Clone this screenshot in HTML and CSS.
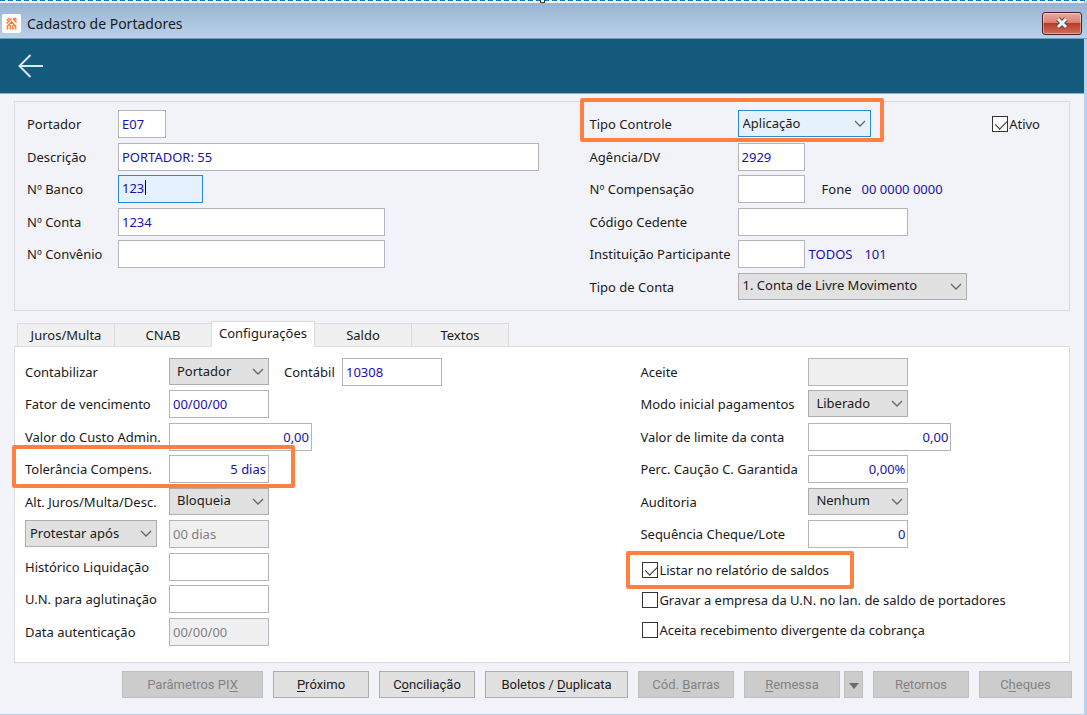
FILE: index.html
```
<!DOCTYPE html>
<html lang="pt-BR">
<head>
  <meta charset="UTF-8">
  <meta name="viewport" content="width=device-width, initial-scale=1.0">
  <title>Cadastro de Portadores</title>
  <link rel="stylesheet" href="styles.css">
</head>
<body>

  <!-- Ícone de seta dos combos -->
  <svg class="sprites" aria-hidden="true">
    <symbol id="seta" viewBox="0 0 12 7">
      <path d="M1 1l5 5 5-5" fill="none" stroke="#666" stroke-width="1.3"/>
    </symbol>
  </svg>

  <div class="janela">
    <span class="puxador"></span>

    <!-- Barra de título -->
    <header class="titulo">
      <svg class="logo" viewBox="0 0 19 19" aria-hidden="true">
        <rect width="19" height="19" rx="2" fill="#fff"/>
        <g fill="none" stroke="#f5813c" stroke-width="1.6">
          <path d="M4.500 6.500L7.500 4M4.500 9.500l5-5M5 12.500l4.500-4.500 4.500 4.500M11 4.500l3.500 4M12.500 3.800l2 2M5.500 12v3.500M8.300 11v4.500M10.900 11v4.500M13.600 12v3.500"/>
        </g>
      </svg>
      <h1>Cadastro de Portadores</h1>
      <button type="button" class="fechar" aria-label="Fechar">
        <svg viewBox="0 0 14 12" aria-hidden="true">
          <path d="M3 2l8 8M11 2l-8 8" stroke="#5b4a55" stroke-width="5"/>
          <path d="M3 2l8 8M11 2l-8 8" stroke="#f2f2f2" stroke-width="3"/>
        </svg>
      </button>
    </header>

    <!-- Barra de ferramentas -->
    <nav class="ferramentas">
      <button type="button" class="voltar" aria-label="Voltar">
        <svg viewBox="0 0 26 24" aria-hidden="true">
          <path d="M25 12H1.500M12.500 1L1.500 12l11 11" fill="none" stroke="#dde6ec" stroke-width="2"/>
        </svg>
      </button>
    </nav>

    <form class="conteudo">

      <!-- Dados principais -->
      <section class="dados">
        <div class="coluna">
          <div class="linha">
            <label for="portador">Portador</label>
            <input type="text" id="portador" class="w48" value="E07">
          </div>
          <div class="linha">
            <label for="descricao">Descrição</label>
            <input type="text" id="descricao" class="w421" value="PORTADOR: 55">
          </div>
          <div class="linha">
            <label for="banco">Nº Banco</label>
            <span class="foco w85"><input type="text" id="banco" value="123"></span>
          </div>
          <div class="linha">
            <label for="conta">Nº Conta</label>
            <input type="text" id="conta" class="w267" value="1234">
          </div>
          <div class="linha">
            <label for="convenio">Nº Convênio</label>
            <input type="text" id="convenio" class="w267">
          </div>
        </div>

        <div class="coluna direita">
          <div class="linha">
            <div class="destaque destaque-tipo">
              <label for="tipo-controle">Tipo Controle</label>
              <span class="combo ativo w133">
                <select id="tipo-controle"><option>Aplicação</option></select>
                <svg><use href="#seta"/></svg>
              </span>
            </div>
            <label class="marca marca-ativo"><input type="checkbox" checked>Ativo</label>
          </div>
          <div class="linha">
            <label for="agencia">Agência/DV</label>
            <input type="text" id="agencia" class="w67" value="2929">
          </div>
          <div class="linha">
            <label for="compensacao">Nº Compensação</label>
            <input type="text" id="compensacao" class="w67">
            <span class="fone">Fone</span>
            <output>00 0000 0000</output>
          </div>
          <div class="linha">
            <label for="cedente">Código Cedente</label>
            <input type="text" id="cedente" class="w170">
          </div>
          <div class="linha">
            <label for="instituicao">Instituição Participante</label>
            <input type="text" id="instituicao" class="w67">
            <output class="instituicao"><span>TODOS</span><span>101</span></output>
          </div>
          <div class="linha">
            <label for="tipo-conta">Tipo de Conta</label>
            <span class="combo w229">
              <select id="tipo-conta"><option>1. Conta de Livre Movimento</option></select>
              <svg><use href="#seta"/></svg>
            </span>
          </div>
        </div>
      </section>

      <!-- Abas -->
      <div class="abas" role="tablist">
        <button type="button" role="tab">Juros/Multa</button>
        <button type="button" role="tab">CNAB</button>
        <button type="button" role="tab" class="selecionada" aria-selected="true">Configurações</button>
        <button type="button" role="tab">Saldo</button>
        <button type="button" role="tab">Textos</button>
      </div>

      <section class="painel">
        <div class="coluna">
          <div class="linha">
            <label for="contabilizar">Contabilizar</label>
            <span class="combo w100">
              <select id="contabilizar"><option>Portador</option></select>
              <svg><use href="#seta"/></svg>
            </span>
            <label for="contabil" class="contabil">Contábil</label>
            <input type="text" id="contabil" class="w100" value="10308">
          </div>
          <div class="linha">
            <label for="fator">Fator de vencimento</label>
            <input type="text" id="fator" class="w100" value="00/00/00">
          </div>
          <div class="linha">
            <label for="custo">Valor do Custo Admin.</label>
            <input type="text" id="custo" class="w143 numero" value="0,00">
          </div>
          <div class="linha">
            <div class="destaque destaque-tolerancia">
              <label for="tolerancia">Tolerância Compens.</label>
              <input type="text" id="tolerancia" class="w100 numero" value="5 dias">
            </div>
          </div>
          <div class="linha">
            <label for="alteracao">Alt. Juros/Multa/Desc.</label>
            <span class="combo w100">
              <select id="alteracao"><option>Bloqueia</option></select>
              <svg><use href="#seta"/></svg>
            </span>
          </div>
          <div class="linha">
            <span class="combo protesto">
              <select id="protesto" aria-label="Protesto"><option>Protestar após</option></select>
              <svg><use href="#seta"/></svg>
            </span>
            <input type="text" class="w100" value="00 dias" aria-label="Dias para protesto" disabled>
          </div>
          <div class="linha">
            <label for="historico">Histórico Liquidação</label>
            <input type="text" id="historico" class="w100">
          </div>
          <div class="linha">
            <label for="aglutinacao">U.N. para aglutinação</label>
            <input type="text" id="aglutinacao" class="w100">
          </div>
          <div class="linha">
            <label for="autenticacao">Data autenticação</label>
            <input type="text" id="autenticacao" class="w100" value="00/00/00" disabled>
          </div>
        </div>

        <div class="coluna direita">
          <div class="linha">
            <label for="aceite">Aceite</label>
            <input type="text" id="aceite" class="w100" disabled>
          </div>
          <div class="linha">
            <label for="modo">Modo inicial pagamentos</label>
            <span class="combo w100">
              <select id="modo"><option>Liberado</option></select>
              <svg><use href="#seta"/></svg>
            </span>
          </div>
          <div class="linha">
            <label for="limite">Valor de limite da conta</label>
            <input type="text" id="limite" class="w143 numero" value="0,00">
          </div>
          <div class="linha">
            <label for="caucao">Perc. Caução C. Garantida</label>
            <input type="text" id="caucao" class="w100 numero" value="0,00%">
          </div>
          <div class="linha">
            <label for="auditoria">Auditoria</label>
            <span class="combo w100">
              <select id="auditoria"><option>Nenhum</option></select>
              <svg><use href="#seta"/></svg>
            </span>
          </div>
          <div class="linha">
            <label for="sequencia">Sequência Cheque/Lote</label>
            <input type="text" id="sequencia" class="w100 numero" value="0">
          </div>
          <div class="marcas">
            <label class="marca destaque destaque-listar"><input type="checkbox" checked>Listar no relatório de saldos</label>
            <label class="marca"><input type="checkbox">Gravar a empresa da U.N. no lan. de saldo de portadores</label>
            <label class="marca"><input type="checkbox">Aceita recebimento divergente da cobrança</label>
          </div>
        </div>
      </section>

      <!-- Botões do rodapé -->
      <footer class="acoes">
        <button type="button" class="w141" disabled>Parâmetros PI<u>X</u></button>
        <button type="button"><u>P</u>róximo</button>
        <button type="button">C<u>o</u>nciliação</button>
        <button type="button" class="w143">Boletos / <u>D</u>uplicata</button>
        <button type="button" disabled>Cód. <u>B</u>arras</button>
        <div class="grupo">
          <button type="button" disabled><u>R</u>emessa</button>
          <button type="button" class="menu" aria-label="Mais opções de remessa" disabled>
            <svg viewBox="0 0 10 6"><path d="M0 0h10L5 6z" fill="#6d6d6d"/></svg>
          </button>
        </div>
        <button type="button" disabled>R<u>e</u>tornos</button>
        <button type="button" class="w93" disabled>C<u>h</u>eques</button>
      </footer>
    </form>
  </div>

</body>
</html>
```
FILE: styles.css
```
/* Base */
* {
  box-sizing: border-box;
}

body {
  margin: 0;
  font-family: "Noto Sans", "Open Sans", sans-serif;
  font-size: 13px;
  color: #1a1a1a;
  background-color: #f2f3f9;
}

input, select, button {
  font: inherit;
}

.sprites {
  display: none;
}

/* Janela */
.janela {
  position: relative;
  display: flex;
  flex-direction: column;
  min-height: 100vh;
  padding-top: 3px;
  border-right: 3px solid #b9d1ea;
  border-bottom: 2px solid #b9d1ea;
}

/* Borda tracejada da seleção */
.janela::before {
  content: "";
  position: absolute;
  top: 0;
  left: 0;
  right: -3px;
  height: 1px;
  background: repeating-linear-gradient(to right, #0078d7 0 5px, #fff 5px 8px);
}

.puxador {
  position: absolute;
  top: 0;
  left: 540px;
  width: 5px;
  height: 3px;
  background-color: #fff;
  border: 1px solid #444;
  border-top: none;
}

.titulo {
  display: flex;
  align-items: center;
  gap: 6px;
  height: 36px;
  padding: 5px 0 0 2px;
  margin-right: -3px;
  background: linear-gradient(#99b4d1, #b9d1ea);
  border-bottom: 1px solid #6f9bbb;
}

.titulo h1 {
  margin: 0;
  font-size: 14px;
  font-weight: normal;
}

.logo {
  width: 19px;
  height: 19px;
}

.fechar {
  display: flex;
  align-items: center;
  justify-content: center;
  width: 40px;
  height: 23px;
  margin: 0 5px 0 auto;
  padding: 0;
  background: linear-gradient(#e9a79b, #d98476 45%, #b93a25 50%, #d0705c);
  border: 1px solid #4b1e2c;
  border-radius: 3px;
  box-shadow: inset 0 0 0 1px rgba(255, 255, 255, 0.4);
}

.fechar svg {
  width: 14px;
  height: 12px;
}

.ferramentas {
  display: flex;
  align-items: center;
  height: 55px;
  padding-left: 18px;
  background-color: #145a7c;
  border-bottom: 1px solid #8fb3c9;
}

.voltar {
  display: flex;
  padding: 0;
  background: none;
  border: none;
}

.voltar svg {
  width: 26px;
  height: 24px;
}

.conteudo {
  display: flex;
  flex: 1;
  flex-direction: column;
  padding: 7px 14px 16px;
}

/* Quadros com os campos */
.dados, .painel {
  display: grid;
  border: 1px solid #dcdce0;
}

.dados {
  grid-template-columns: 562fr 479fr;
  min-height: 210px;
  padding: 8px 0 5px 12px;
}

.painel {
  grid-template-columns: 616fr 429fr;
  min-height: 317px;
  padding: 11px 0 12px 10px;
  background-color: #fff;
}

.coluna {
  display: grid;
  grid-template-rows: repeat(6, 1fr);
}

.painel .coluna {
  grid-template-rows: repeat(9, 1fr);
}

.linha, .linha > .destaque {
  display: flex;
  align-items: flex-start;
}

.linha label, .linha output, .fone {
  line-height: 28px;
  white-space: nowrap;
}

.dados .linha label:first-child {
  width: 91px;
}

.dados .direita .linha label:first-child {
  width: 148px;
}

.painel .linha label:first-child {
  width: 144px;
}

.painel .direita .linha label:first-child {
  width: 168px;
}

/* Campos de texto */
input[type="text"] {
  height: 28px;
  padding: 0 3px;
  color: #2010a8;
  background-color: #fff;
  border: 1px solid #b4b4bc;
  border-radius: 0;
  outline: none;
}

input[type="text"]:disabled {
  color: #808080;
  background-color: #f0f0f0;
}

input[type="text"].numero {
  padding-right: 2px;
  text-align: right;
}

.foco {
  position: relative;
}

.foco input[type="text"] {
  width: 100%;
  padding-bottom: 3px;
  background-color: #e5f1ff;
  border-color: #2a8ad8;
}

/* Cursor de texto */
.foco::after {
  content: "";
  position: absolute;
  top: 5px;
  left: 27px;
  width: 1px;
  height: 15px;
  background-color: #000;
}

output {
  color: #2010a8;
}

.fone {
  margin: 0 10px 0 17px;
}

.instituicao {
  display: flex;
  gap: 12px;
  margin-left: 4px;
}

/* Combos */
.combo {
  position: relative;
}

.combo select {
  display: block;
  width: 100%;
  height: 27px;
  padding: 0 20px 2px 4px;
  color: #1a1a1a;
  background-color: #e1e1e1;
  border: 1px solid #adadad;
  border-radius: 0;
  appearance: none;
}

.painel .combo.w100 select {
  padding-left: 7px;
}

.combo.ativo select {
  background-color: #e5f1fb;
  border-color: #2a8ad8;
}

.combo svg {
  position: absolute;
  top: 10px;
  right: 5px;
  width: 12px;
  height: 7px;
  pointer-events: none;
}

.protesto {
  width: 132px;
  margin-right: 12px;
}

.painel .linha .contabil {
  width: 58px;
  margin-left: 15px;
}

/* Larguras */
.w48 { width: 48px; }
.w67 { width: 67px; }
.w85 { width: 85px; }
.w100 { width: 100px; }
.w133 { width: 133px; }
.w143 { width: 143px; }
.w170 { width: 170px; }
.w229 { width: 229px; }
.w267 { width: 267px; }
.w421 { width: 421px; }

/* Caixas de seleção */
.marca {
  display: flex;
  align-items: center;
  gap: 1px;
  white-space: nowrap;
}

.marca input {
  position: relative;
  width: 16px;
  height: 16px;
  margin: 0;
  background-color: #fff;
  border: 1px solid #333;
  appearance: none;
}

.marca input:checked::after {
  content: "";
  position: absolute;
  top: 0;
  left: 5px;
  width: 6px;
  height: 11px;
  border: solid #333;
  border-width: 0 1px 1px 0;
  transform: rotate(45deg);
}

.marca-ativo {
  margin: 0 29px 0 auto;
}

.marcas {
  display: grid;
  grid-row: span 3;
  grid-template-rows: repeat(3, 30px);
  justify-items: start;
  padding: 2px 0 0 2px;
}

/* Retângulos de destaque */
.destaque {
  position: relative;
}

.destaque::after {
  content: "";
  position: absolute;
  border: 4px solid #ff8040;
  border-radius: 2px;
  pointer-events: none;
}

.destaque-tipo::after {
  inset: -12px -13px -4px -10px;
}

.destaque-tolerancia::after {
  inset: -10px -26px -5px -13px;
}

.destaque-listar::after {
  inset: -4px -25px -4px -16px;
}

/* Abas */
.abas {
  display: flex;
  align-items: flex-end;
  margin: 10px 0 -1px 3px;
}

.abas button {
  width: 98px;
  height: 24px;
  margin-right: -1px;
  padding: 0;
  color: #1a1a1a;
  background-color: #f0f0f0;
  border: 1px solid #dcdce0;
}

.abas .selecionada {
  width: 104px;
  height: 26px;
  padding-bottom: 2px;
  background-color: #fff;
  border-bottom-color: #fff;
  z-index: 1;
}

/* Rodapé */
.acoes {
  display: flex;
  justify-content: flex-end;
  gap: 10px;
  margin: 8px -2px 0 0;
}

.acoes button {
  width: 96px;
  height: 27px;
  padding: 0;
  font-family: Roboto, sans-serif;
  font-size: 13px;
  color: #1a1a1a;
  background-color: #e1e1e1;
  border: 1px solid #adadad;
}

.acoes button:disabled {
  color: #838383;
  background-color: #ccc;
  border-color: #bfbfbf;
}

.acoes .w93 { width: 93px; }
.acoes .w141 { width: 141px; }
.acoes .w143 { width: 143px; }

.acoes u {
  text-underline-offset: 2px;
}

.grupo {
  display: flex;
  gap: 4px;
}

.acoes .menu {
  width: 19px;
}

.menu svg {
  width: 10px;
  height: 6px;
}
```
